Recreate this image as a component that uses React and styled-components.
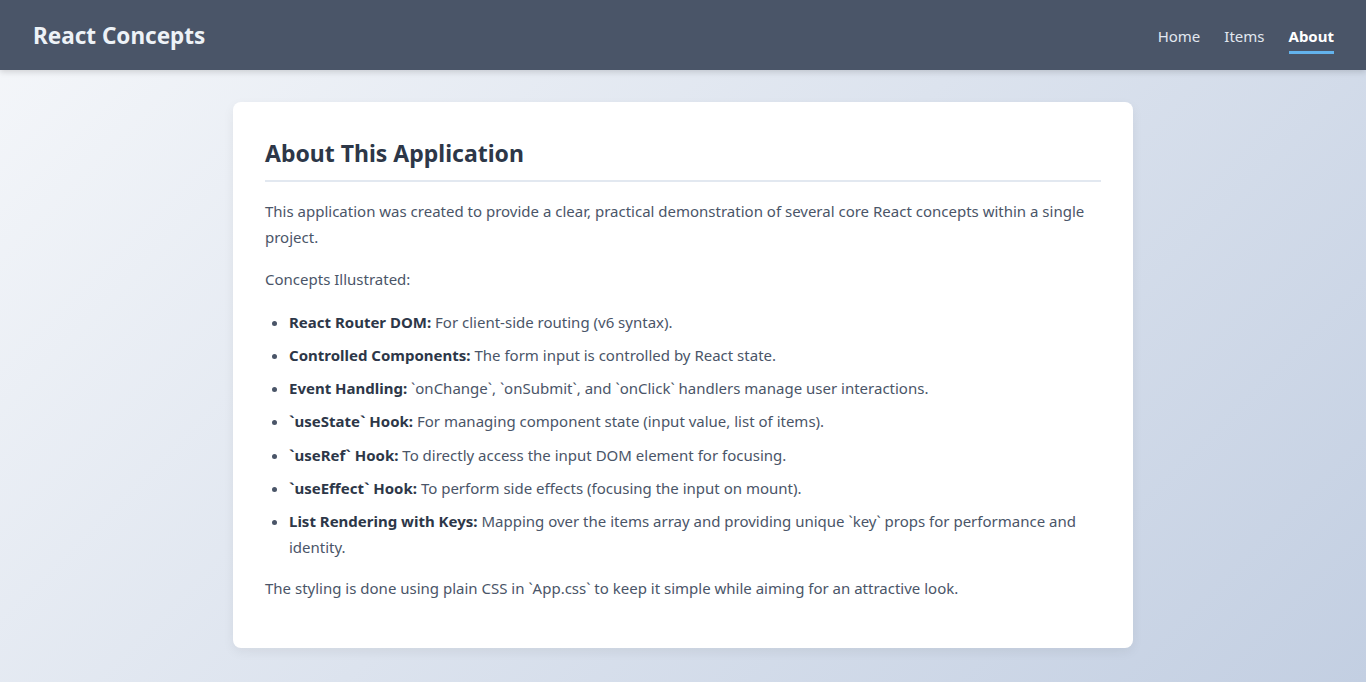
import React from "react";
import styled, { createGlobalStyle } from "styled-components";

const GlobalStyle = createGlobalStyle`
  * {
    box-sizing: border-box;
  }
  html, body {
    margin: 0;
    padding: 0;
  }
  body {
    font-family: "Noto Sans", "Open Sans", sans-serif;
    color: #4a5568;
    line-height: 1.6;
    min-height: 100vh;
    background: linear-gradient(135deg, #f5f7fa 0%, #c3cfe2 100%);
    background-attachment: fixed;
  }
`;

const Page = styled.div`
  min-height: 100vh;
  display: flex;
  flex-direction: column;
`;

const Header = styled.header`
  height: 70px;
  background: #4a5568;
  display: flex;
  align-items: center;
  justify-content: space-between;
  padding: 0 32px 0 33px;
  box-shadow: 0 2px 6px rgba(0, 0, 0, 0.15);
`;

const Brand = styled.h1`
  margin: 3px 0 0;
  font-size: 22.5px;
  font-weight: 700;
  color: #edf2f7;
  line-height: 1;
`;

const Nav = styled.nav`
  display: flex;
  gap: 24px;
  align-items: center;
`;

const NavLink = styled.a`
  color: ${props => (props.active ? "#ffffff" : "#e2e8f0")};
  font-weight: ${props => (props.active ? 700 : 400)};
  font-size: 15px;
  line-height: 24px;
  text-decoration: none;
  padding: 8px 0 3px;
  border-bottom: 3px solid ${props => (props.active ? "#63b3ed" : "transparent")};
`;

const Main = styled.main`
  display: flex;
  justify-content: center;
  padding: 32px 16px;
`;

const Card = styled.section`
  width: 900px;
  background: #ffffff;
  border-radius: 8px;
  padding: 32px 32px 29px;
  box-shadow: 0 4px 12px rgba(0, 0, 0, 0.06);
`;

const Title = styled.h2`
  margin: 0 0 17px;
  font-size: 23px;
  font-weight: 700;
  line-height: 38px;
  color: #2d3748;
  padding-bottom: 8px;
  border-bottom: 2px solid #e2e8f0;
`;

const Text = styled.p`
  margin: 0 0 17px;
  font-size: 15px;
  line-height: 25.6px;
`;

const List = styled.ul`
  margin: 0 0 16px;
  padding-left: 24px;
`;

const Item = styled.li`
  font-size: 15px;
  line-height: 25.6px;
  margin-bottom: 7.6px;
  &:last-child {
    margin-bottom: 0;
  }
`;

const Strong = styled.strong`
  color: #2d3748;
  font-weight: 700;
`;

const concepts = [
  ["React Router DOM:", "For client-side routing (v6 syntax)."],
  ["Controlled Components:", "The form input is controlled by React state."],
  ["Event Handling:", "`onChange`, `onSubmit`, and `onClick` handlers manage user interactions."],
  ["`useState` Hook:", "For managing component state (input value, list of items)."],
  ["`useRef` Hook:", "To directly access the input DOM element for focusing."],
  ["`useEffect` Hook:", "To perform side effects (focusing the input on mount)."],
  ["List Rendering with Keys:", "Mapping over the items array and providing unique `key` props for performance and identity."],
];

export default function App() {
  return (
    <>
      <GlobalStyle />
      <Page>
        <Header>
          <Brand>React Concepts</Brand>
          <Nav>
            <NavLink href="#">Home</NavLink>
            <NavLink href="#">Items</NavLink>
            <NavLink href="#" active>About</NavLink>
          </Nav>
        </Header>
        <Main>
          <Card>
            <Title>About This Application</Title>
            <Text>
              This application was created to provide a clear, practical demonstration of several core React concepts within a single project.
            </Text>
            <Text>Concepts Illustrated:</Text>
            <List>
              {concepts.map(([label, desc]) => (
                <Item key={label}>
                  <Strong>{label}</Strong> {desc}
                </Item>
              ))}
            </List>
            <Text>
              The styling is done using plain CSS in `App.css` to keep it simple while aiming for an attractive look.
            </Text>
          </Card>
        </Main>
      </Page>
    </>
  );
}
